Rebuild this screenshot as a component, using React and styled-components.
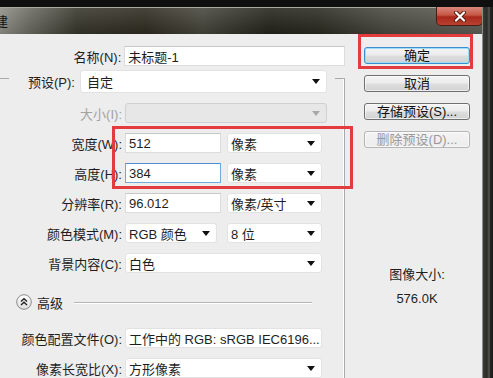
import React from 'react';
import styled, { createGlobalStyle } from 'styled-components';

const GlobalStyle = createGlobalStyle`
  html, body {
    margin: 0;
    padding: 0;
    overflow: hidden;
    background: #111111;
  }
  body {
    font-family: "Liberation Sans", "Noto Sans CJK SC", sans-serif;
    font-size: 13px;
    color: #1e1e1e;
  }
`;

const Page = styled.div`
  position: relative;
  width: 493px;
  height: 378px;
  display: flex;
  flex-direction: column;
  overflow: hidden;
  background: #111111;
`;

const TopStrip = styled.div`
  height: 7px;
  flex: none;
  background: #0f0f0f;
`;

const Window = styled.div`
  flex: 1;
  display: flex;
  min-height: 0;
`;

const Dialog = styled.div`
  width: 482px;
  display: flex;
  flex-direction: column;
  overflow: hidden;
`;

const TitleBar = styled.div`
  height: 27px;
  flex: none;
  display: flex;
  justify-content: space-between;
  align-items: flex-start;
  border-top: 1px solid #a9a9a2;
  box-sizing: border-box;
  background:
    linear-gradient(180deg, rgba(255, 255, 255, 0.12), rgba(0, 0, 0, 0.1)),
    linear-gradient(
      90deg,
      #8e8e86 0%,
      #6a6960 6%,
      #36352a 16%,
      #2d2b1f 30%,
      #45443a 42%,
      #23221a 56%,
      #2a291f 66%,
      #48473e 80%,
      #5d5d56 100%
    );
`;

const Title = styled.span`
  margin: 5px 0 0 -18px;
  color: #111;
  font-family: "Noto Sans CJK SC", sans-serif;
  font-size: 13px;
  line-height: 16px;
`;

const CloseButton = styled.div`
  width: 47px;
  height: 19px;
  margin-top: -1px;
  margin-right: -1px;
  box-sizing: border-box;
  border: 1px solid #4a1c16;
  border-top: none;
  border-radius: 0 0 5px 5px;
  background: linear-gradient(180deg, #d9887c 0%, #c65645 45%, #a9291b 55%, #b9412f 100%);
  display: flex;
  align-items: center;
  justify-content: center;
`;

const Body = styled.div`
  flex: 1;
  display: flex;
  background: #ededed;
  min-height: 0;
`;

const LeftPanel = styled.div`
  width: 345px;
  flex: none;
  padding-top: 12px;
  box-sizing: border-box;
`;

const Row = styled.div`
  display: flex;
  align-items: center;
  height: ${(p) => p.h || 30}px;
`;

const Label = styled.div`
  width: 122px;
  margin-right: 3px;
  text-align: right;
  white-space: nowrap;
  color: ${(p) => (p.disabled ? '#a2a2a2' : '#1e1e1e')};
`;

const TextBox = styled.div`
  width: ${(p) => p.w}px;
  height: 20px;
  box-sizing: border-box;
  background: #ffffff;
  border: 1px solid ${(p) => (p.focused ? '#6fa8dc' : '#dcdcdc')};
  border-top-color: ${(p) => (p.focused ? '#4f8fcf' : '#c8c8c8')};
  padding-left: 3px;
  display: flex;
  align-items: center;
  white-space: nowrap;
`;

const Select = styled.div`
  width: ${(p) => p.w}px;
  height: ${(p) => p.h || 20}px;
  margin-left: ${(p) => p.ml || 0}px;
  box-sizing: border-box;
  background: ${(p) => (p.disabled ? '#e7e7e7' : '#ffffff')};
  border: 1px solid ${(p) => (p.disabled ? '#d0d0d0' : '#e2e2e2')};
  border-radius: 3px;
  padding: 0 6px 0 ${(p) => p.pl || 3}px;
  display: flex;
  align-items: center;
  justify-content: space-between;
  white-space: nowrap;
  overflow: hidden;
`;

const Arrow = styled.span`
  flex: none;
  width: 0;
  height: 0;
  border-left: 4px solid transparent;
  border-right: 4px solid transparent;
  border-top: 5px solid ${(p) => (p.disabled ? '#a8a8a8' : '#111111')};
  margin-left: 4px;
`;

const GroupBox = styled.fieldset`
  width: 355px;
  min-width: 0;
  box-sizing: border-box;
  margin: -3px 0 0 -10px;
  padding: 5px 0 0 9px;
  border: 1px solid #aaaaaa;
  border-bottom: none;
  box-shadow: inset -1px 0 0 #ffffff;
`;

const Legend = styled.legend`
  margin-left: 9px;
  padding: 7px 8px 0 19px;
  display: flex;
  align-items: center;
  gap: 5px;
`;

const AdvancedRow = styled.div`
  display: flex;
  align-items: center;
  height: 24px;
  margin: 12px 32px 9px 16px;
  gap: 5px;
`;

const AdvancedText = styled.span`
  white-space: nowrap;
`;

const Rule = styled.div`
  flex: 1;
  height: 1px;
  margin-left: 6px;
  background: #b4b4b4;
  box-shadow: 0 1px 0 #ffffff;
`;

const RightPanel = styled.div`
  flex: 1;
  padding: 13px 0 0 19px;
  display: flex;
  flex-direction: column;
  gap: 11px;
`;

const Button = styled.div`
  width: 106px;
  height: 17px;
  box-sizing: border-box;
  border: 1px solid ${(p) => (p.primary ? '#3c8fcf' : p.disabled ? '#b5b5b5' : '#707070')};
  border-radius: 3px;
  background: ${(p) =>
    p.disabled
      ? 'linear-gradient(180deg, #f4f4f4, #ececec)'
      : 'linear-gradient(180deg, #f4f4f4 0%, #ececec 48%, #dedede 52%, #d2d2d2 100%)'};
  box-shadow: ${(p) =>
    p.primary ? 'inset 0 0 0 1px #9fdcf5' : 'inset 0 0 0 1px rgba(255,255,255,0.6)'};
  color: ${(p) => (p.disabled ? '#9a9a9a' : '#111111')};
  display: flex;
  align-items: center;
  justify-content: center;
  line-height: 1;
  white-space: nowrap;
`;

const SizeInfo = styled.div`
  width: 106px;
  margin-top: 107px;
  display: flex;
  flex-direction: column;
  align-items: center;
  gap: 6px;
  line-height: 18px;
`;

const RightFrame = styled.div`
  flex: 1;
  border-left: 1px solid #8c8c88;
  background: linear-gradient(90deg, #3a3a36 0%, #2b2b28 40%, #565652 60%, #262623 75%, #1c1c1a 100%);
`;

const Highlight = styled.div`
  position: absolute;
  box-sizing: border-box;
  border: 3px solid #e33b3e;
  pointer-events: none;
`;

const AdvancedIcon = () => (
  <svg width="16" height="16" viewBox="0 0 16 16">
    <defs>
      <linearGradient id="advg" x1="0" y1="0" x2="0" y2="1">
        <stop offset="0" stopColor="#ffffff" />
        <stop offset="1" stopColor="#dcdcdc" />
      </linearGradient>
    </defs>
    <circle cx="8" cy="8" r="7.3" fill="url(#advg)" stroke="#8a8a8a" strokeWidth="1" />
    <polyline points="5,7.5 8,4.8 11,7.5" fill="none" stroke="#222" strokeWidth="1.4" />
    <polyline points="5,11 8,8.3 11,11" fill="none" stroke="#222" strokeWidth="1.4" />
  </svg>
);

const CloseIcon = () => (
  <svg width="14" height="11" viewBox="0 0 14 11">
    <path d="M3 1.5 L11 9.5 M11 1.5 L3 9.5" stroke="#5a1a12" strokeWidth="4" strokeLinecap="round" />
    <path d="M3 1.5 L11 9.5 M11 1.5 L3 9.5" stroke="#ffffff" strokeWidth="2.2" strokeLinecap="round" />
  </svg>
);

export default function App() {
  return (
    <>
      <GlobalStyle />
      <Page>
        <TopStrip />
        <Window>
          <Dialog>
            <TitleBar>
              <Title>新建</Title>
              <CloseButton>
                <CloseIcon />
              </CloseButton>
            </TitleBar>
            <Body>
              <LeftPanel>
                <Row h={20}>
                  <Label>名称(N):</Label>
                  <TextBox w={222}>未标题-1</TextBox>
                </Row>
                <GroupBox>
                  <Legend>
                    <span>预设(P):</span>
                    <Select w={247} h={23} pl={6}>
                      自定
                      <Arrow />
                    </Select>
                  </Legend>
                  <Row>
                    <Label disabled>大小(I):</Label>
                    <Select w={202} disabled>
                      <span />
                      <Arrow disabled />
                    </Select>
                  </Row>
                  <Row>
                    <Label>宽度(W):</Label>
                    <TextBox w={96}>512</TextBox>
                    <Select w={95} ml={6}>
                      像素
                      <Arrow />
                    </Select>
                  </Row>
                  <Row>
                    <Label>高度(H):</Label>
                    <TextBox w={96} focused>
                      384
                    </TextBox>
                    <Select w={95} ml={6}>
                      像素
                      <Arrow />
                    </Select>
                  </Row>
                  <Row>
                    <Label>分辨率(R):</Label>
                    <TextBox w={96}>96.012</TextBox>
                    <Select w={95} ml={6}>
                      像素/英寸
                      <Arrow />
                    </Select>
                  </Row>
                  <Row>
                    <Label>颜色模式(M):</Label>
                    <Select w={92}>
                      RGB 颜色
                      <Arrow />
                    </Select>
                    <Select w={95} ml={10}>
                      8 位
                      <Arrow />
                    </Select>
                  </Row>
                  <Row>
                    <Label>背景内容(C):</Label>
                    <Select w={197}>
                      白色
                      <Arrow />
                    </Select>
                  </Row>
                  <AdvancedRow>
                    <AdvancedIcon />
                    <AdvancedText>高级</AdvancedText>
                    <Rule />
                  </AdvancedRow>
                  <Row>
                    <Label>颜色配置文件(O):</Label>
                    <Select w={197}>
                      工作中的 RGB: sRGB IEC6196...
                      <Arrow />
                    </Select>
                  </Row>
                  <Row>
                    <Label>像素长宽比(X):</Label>
                    <Select w={197}>
                      方形像素
                      <Arrow />
                    </Select>
                  </Row>
                </GroupBox>
              </LeftPanel>
              <RightPanel>
                <Button primary>确定</Button>
                <Button>取消</Button>
                <Button>存储预设(S)...</Button>
                <Button disabled>删除预设(D)...</Button>
                <SizeInfo>
                  <span>图像大小:</span>
                  <span>576.0K</span>
                </SizeInfo>
              </RightPanel>
            </Body>
          </Dialog>
          <RightFrame />
        </Window>
        <Highlight style={{ left: 358, top: 34, width: 115, height: 35 }} />
        <Highlight style={{ left: 112, top: 126, width: 241, height: 63 }} />
      </Page>
    </>
  );
}
